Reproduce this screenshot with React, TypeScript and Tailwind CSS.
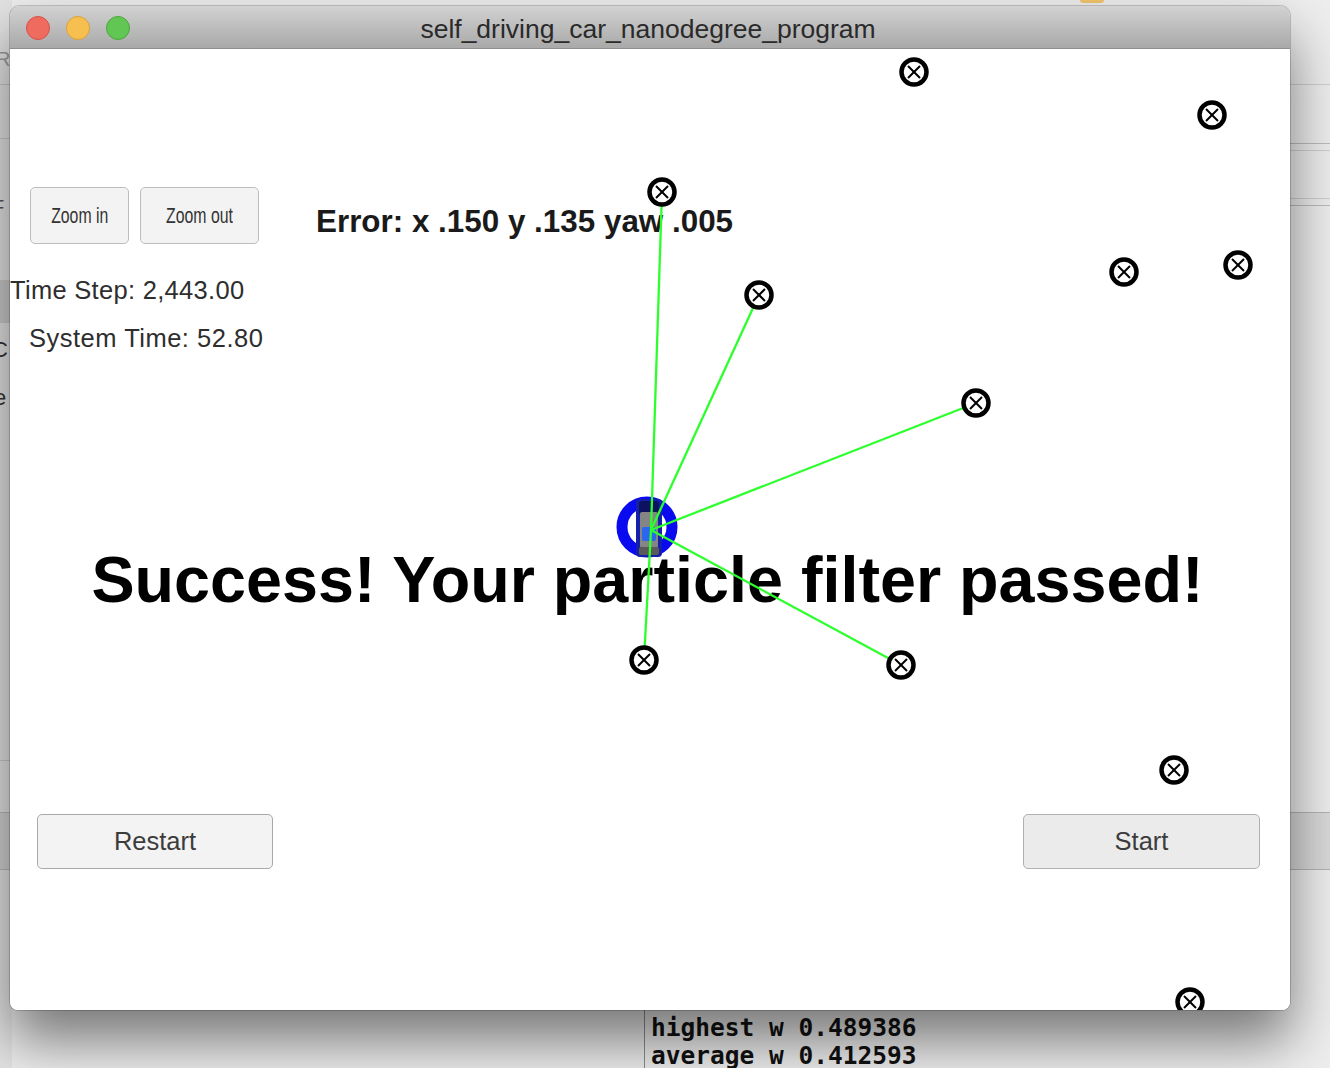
import React from "react";

const landmarks: [number, number][] = [
  [904, 23],
  [1202, 66],
  [652, 143],
  [749, 246],
  [1114, 223],
  [1228, 216],
  [966, 354],
  [634, 611],
  [891, 616],
  [1164, 721],
  [1180, 953],
];

const observed: [number, number][] = [
  [652, 143],
  [749, 246],
  [966, 354],
  [634, 611],
  [891, 616],
];

const ORIGIN: [number, number] = [641, 481];

function Landmark({ x, y }: { x: number; y: number }) {
  return (
    <g>
      <circle cx={x} cy={y} r={12.5} fill="#ffffff" stroke="#000000" strokeWidth={4.5} />
      <line x1={x - 6} y1={y - 6} x2={x + 6} y2={y + 6} stroke="#000" strokeWidth={2} />
      <line x1={x + 6} y1={y - 6} x2={x - 6} y2={y + 6} stroke="#000" strokeWidth={2} />
    </g>
  );
}

function Scene() {
  return (
    <svg
      className="pointer-events-none absolute left-0 top-0"
      width={1280}
      height={961}
      viewBox="0 0 1280 961"
    >
      {/* car ring */}
      <circle cx={637} cy={478} r={25} fill="none" stroke="#0a0af0" strokeWidth={11} />
      {/* car */}
      <rect x={626} y={450} width={26} height={58} rx={4} fill="#1520a8" />
      <rect x={629} y={452} width={20} height={14} rx={3} fill="#0c1260" />
      <rect x={630} y={463} width={18} height={36} rx={2} fill="#858585" />
      <rect x={632} y={478} width={14} height={14} rx={2} fill="#2a66ee" />
      <rect x={629} y={498} width={20} height={8} rx={2} fill="#5a5a5a" />
      {/* observation lines */}
      {observed.map(([x, y], i) => (
        <line
          key={i}
          x1={ORIGIN[0]}
          y1={ORIGIN[1]}
          x2={x}
          y2={y}
          stroke="#2cff2c"
          strokeWidth={2.3}
        />
      ))}
      {landmarks.map(([x, y], i) => (
        <Landmark key={i} x={x} y={y} />
      ))}
    </svg>
  );
}

export default function App() {
  return (
    <div className="relative h-[1068px] w-[1330px] overflow-hidden bg-[#ededed] pl-[10px] pt-[6px] font-['Liberation_Sans',Arial,sans-serif]">
      {/* desktop background pieces (windows behind) */}
      <div className="absolute left-0 top-0 h-[1068px] w-[12px] overflow-hidden bg-[#e3e3e3]">
        <div className="absolute left-0 top-[84px] h-px w-full bg-[#c8c8c8]" />
        <div className="absolute left-0 top-[138px] h-px w-full bg-[#c8c8c8]" />
        <div className="absolute left-0 top-[280px] h-[43px] w-full bg-[#cbcbcb]" />
        <div className="absolute left-0 top-[760px] h-px w-full bg-[#c8c8c8]" />
        <div className="absolute left-0 top-[812px] h-[58px] w-full border-y border-[#b8b8b8] bg-[#d2d2d2]" />
        <span className="absolute left-[-4px] top-[44px] text-[20px] text-[#9a9a9a]">R</span>
        <span className="absolute left-[-8px] top-[192px] text-[20px] text-[#555]">F</span>
        <span className="absolute left-[-8px] top-[333px] text-[22px] text-[#333]">C</span>
        <span className="absolute left-[-6px] top-[381px] text-[22px] text-[#333]">e</span>
      </div>
      <div className="absolute right-0 top-0 h-[1068px] w-[42px] bg-[#eeeeee]">
        <div className="absolute left-0 top-[84px] h-px w-full bg-[#cfcfcf]" />
        <div className="absolute left-0 top-[143px] h-px w-full bg-[#bcbcbc]" />
        <div className="absolute left-0 top-[150px] h-px w-full bg-[#cfcfcf]" />
        <div className="absolute left-0 top-[198px] h-px w-full bg-[#cfcfcf]" />
        <div className="absolute left-0 top-[205px] h-px w-full bg-[#bcbcbc]" />
        <div className="absolute left-0 top-[812px] h-[58px] w-full border-y border-[#b5b5b5] bg-[#dadada]" />
      </div>
      <div className="absolute left-[1080px] top-0 h-[3px] w-[24px] rounded-b bg-[#f2c46c]" />

      {/* main window */}
      <div className="relative z-10 flex h-[1004px] w-[1280px] flex-col overflow-hidden rounded-t-[10px] rounded-b-[8px] shadow-[0_30px_55px_rgba(0,0,0,0.5),0_0_0_1px_rgba(0,0,0,0.18)]">
        {/* title bar */}
        <div className="relative flex h-[43px] shrink-0 items-center justify-center border-b border-[#8e8e8e] bg-gradient-to-b from-[#d2d2d2] to-[#a9a9a9]">
          <div className="absolute left-[16px] top-[10px] flex gap-[16px]">
            <div className="h-[24px] w-[24px] rounded-full border border-[#d65146] bg-[#ef6b5f]" />
            <div className="h-[24px] w-[24px] rounded-full border border-[#d9a13b] bg-[#f6bf4f]" />
            <div className="h-[24px] w-[24px] rounded-full border border-[#4aa63c] bg-[#62c655]" />
          </div>
          <span className="pt-[4px] pr-[4px] text-[26.5px] leading-none text-[#2a2a2a]">
            self_driving_car_nanodegree_program
          </span>
        </div>

        {/* content */}
        <div className="relative flex-1 bg-white">
          <div className="flex flex-col">
            <div className="mt-[138px] flex items-start pl-[20px]">
              <button className="flex h-[57px] w-[99px] items-center justify-center rounded-[5px] border border-[#bdbdbd] bg-[#f3f3f3]">
                <span className="inline-block scale-x-[0.72] text-[22px] leading-none text-[#333]">Zoom in</span>
              </button>
              <button className="ml-[11px] flex h-[57px] w-[119px] items-center justify-center rounded-[5px] border border-[#bdbdbd] bg-[#f3f3f3]">
                <span className="inline-block scale-x-[0.72] text-[22px] leading-none text-[#333]">Zoom out</span>
              </button>
              <div className="ml-[57px] mt-[19px] text-[31.4px] font-bold leading-none text-[#1a1a1a]">
                Error: x .150 y .135 yaw .005
              </div>
            </div>

            <div className="mt-[33px] text-[25.5px] leading-[26px] tracking-[0.3px] text-[#2e2e2e]">
              Time Step: 2,443.00
            </div>
            <div className="mt-[22px] pl-[19px] text-[25.5px] leading-[26px] tracking-[0.5px] text-[#2e2e2e]">
              System Time: 52.80
            </div>

            <div className="mt-[197px] pr-[5px] text-center text-[64.7px] font-bold leading-none text-black">
              Success! Your particle filter passed!
            </div>

            <div className="mt-[201px] flex justify-between pl-[27px] pr-[30px]">
              <button className="flex h-[55px] w-[236px] items-center justify-center rounded-[5px] border border-[#a9a9a9] bg-[#f3f3f3] text-[25.5px] text-[#3c3c3c]">
                Restart
              </button>
              <button className="flex h-[55px] w-[237px] items-center justify-center rounded-[5px] border border-[#b0b0b0] bg-[#ebebeb] text-[25.5px] text-[#3c3c3c]">
                Start
              </button>
            </div>
          </div>
          <Scene />
        </div>
      </div>

      {/* terminal behind */}
      <div className="relative ml-[634px] border-l border-[#8c8c8c] pl-[6px] pt-[4px] font-['DejaVu_Sans_Mono',monospace] text-[24.5px] font-bold leading-[28px] text-[#111]">
        <div>highest w 0.489386</div>
        <div>average w 0.412593</div>
      </div>
    </div>
  );
}
